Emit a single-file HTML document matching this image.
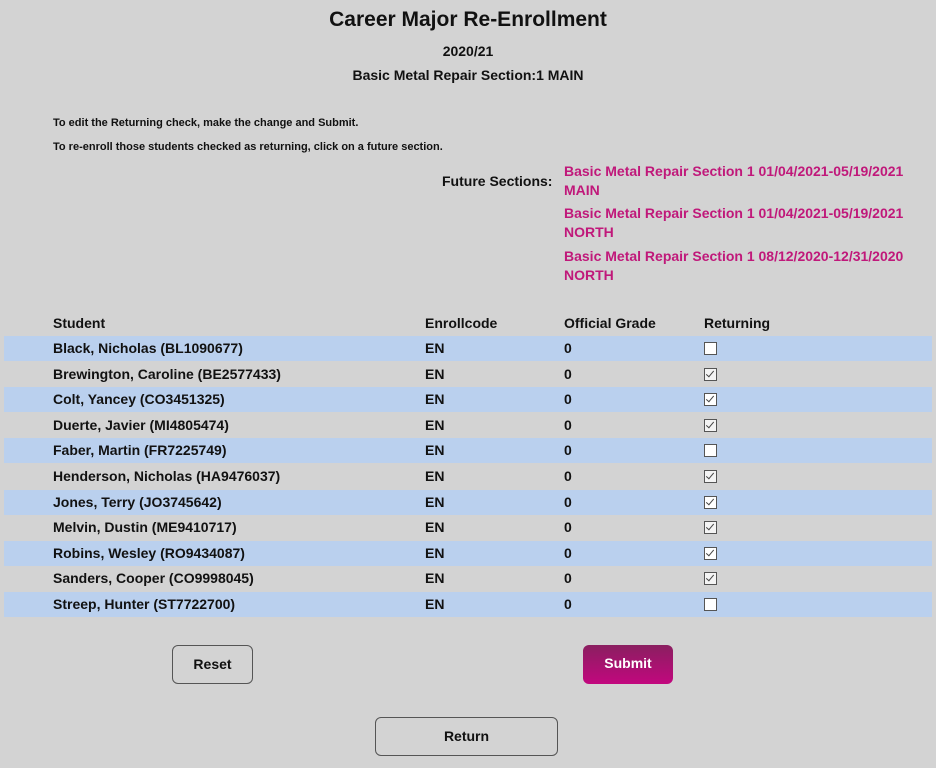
<!DOCTYPE html>
<html><head><meta charset="utf-8"><style>
body{margin:0;background:#d3d3d3;width:936px;height:768px;overflow:hidden;font-family:"Liberation Sans",sans-serif;color:#111;position:relative}
.a{position:absolute;white-space:nowrap;font-weight:bold}
.c{text-align:center;left:0;width:936px}
.row{position:absolute;left:4px;width:928px;height:25px}
.row.b{background:#bad0ee}
.row span{position:absolute;top:4px;font-size:14px;font-weight:bold}
.cb{position:absolute;left:704px;top:6px;width:11px;height:11px;border:1px solid #555;background:#fff;box-sizing:content-box}
.cb.k:after{content:"";position:absolute;left:3px;top:0px;width:3px;height:7px;border:solid #444;border-width:0 1.5px 1.5px 0;transform:rotate(40deg)}
.ck{background:#f4f4f4}
.pk{color:#c0187a;font-size:14px;line-height:18.5px;position:absolute;left:564px;font-weight:bold}
.btn{position:absolute;border:1px solid #555;border-radius:6px;font-size:14px;font-weight:bold;text-align:center;box-sizing:border-box}
</style></head><body>
<div class="a c" style="top:8px;font-size:21px">Career Major Re-Enrollment</div>
<div class="a c" style="top:43px;font-size:14px">2020/21</div>
<div class="a c" style="top:67px;font-size:14px">Basic Metal Repair Section:1 MAIN</div>
<div class="a" style="left:53px;top:117px;font-size:11px">To edit the Returning check, make the change and Submit.</div>
<div class="a" style="left:53px;top:141px;font-size:11px">To re-enroll those students checked as returning, click on a future section.</div>
<div class="a" style="left:442px;top:173px;font-size:14px">Future Sections:</div>
<div class="pk" style="top:162px">Basic Metal Repair Section 1 01/04/2021-05/19/2021<br>MAIN</div>
<div class="pk" style="top:204px">Basic Metal Repair Section 1 01/04/2021-05/19/2021<br>NORTH</div>
<div class="pk" style="top:247px">Basic Metal Repair Section 1 08/12/2020-12/31/2020<br>NORTH</div>
<div class="a" style="left:53px;top:315px;font-size:14px">Student</div>
<div class="a" style="left:425px;top:315px;font-size:14px">Enrollcode</div>
<div class="a" style="left:564px;top:315px;font-size:14px">Official Grade</div>
<div class="a" style="left:704px;top:315px;font-size:14px">Returning</div>

<div class="row b" style="top:336px"><span style="left:49px">Black, Nicholas (BL1090677)</span><span style="left:421px">EN</span><span style="left:560px">0</span><div class="cb" style="left:700px"></div></div>
<div class="row" style="top:361.6px"><span style="left:49px">Brewington, Caroline (BE2577433)</span><span style="left:421px">EN</span><span style="left:560px">0</span><div class="cb k ck" style="left:700px"></div></div>
<div class="row b" style="top:387.2px"><span style="left:49px">Colt, Yancey (CO3451325)</span><span style="left:421px">EN</span><span style="left:560px">0</span><div class="cb k" style="left:700px"></div></div>
<div class="row" style="top:412.8px"><span style="left:49px">Duerte, Javier (MI4805474)</span><span style="left:421px">EN</span><span style="left:560px">0</span><div class="cb k ck" style="left:700px"></div></div>
<div class="row b" style="top:438.4px"><span style="left:49px">Faber, Martin (FR7225749)</span><span style="left:421px">EN</span><span style="left:560px">0</span><div class="cb" style="left:700px"></div></div>
<div class="row" style="top:464px"><span style="left:49px">Henderson, Nicholas (HA9476037)</span><span style="left:421px">EN</span><span style="left:560px">0</span><div class="cb k ck" style="left:700px"></div></div>
<div class="row b" style="top:489.6px"><span style="left:49px">Jones, Terry (JO3745642)</span><span style="left:421px">EN</span><span style="left:560px">0</span><div class="cb k" style="left:700px"></div></div>
<div class="row" style="top:515.2px"><span style="left:49px">Melvin, Dustin (ME9410717)</span><span style="left:421px">EN</span><span style="left:560px">0</span><div class="cb k ck" style="left:700px"></div></div>
<div class="row b" style="top:540.8px"><span style="left:49px">Robins, Wesley (RO9434087)</span><span style="left:421px">EN</span><span style="left:560px">0</span><div class="cb k" style="left:700px"></div></div>
<div class="row" style="top:566.4px"><span style="left:49px">Sanders, Cooper (CO9998045)</span><span style="left:421px">EN</span><span style="left:560px">0</span><div class="cb k ck" style="left:700px"></div></div>
<div class="row b" style="top:592px"><span style="left:49px">Streep, Hunter (ST7722700)</span><span style="left:421px">EN</span><span style="left:560px">0</span><div class="cb" style="left:700px"></div></div>

<div class="btn" style="left:172px;top:645px;width:81px;height:39px;line-height:37px;background:#d3d3d3">Reset</div>
<div class="btn" style="left:583px;top:645px;width:90px;height:39px;line-height:37px;border:none;color:#fff;background:linear-gradient(#8a1f60,#c2077e)">Submit</div>
<div class="btn" style="left:375px;top:717px;width:183px;height:39px;line-height:37px;background:#d3d3d3">Return</div>
</body></html>
